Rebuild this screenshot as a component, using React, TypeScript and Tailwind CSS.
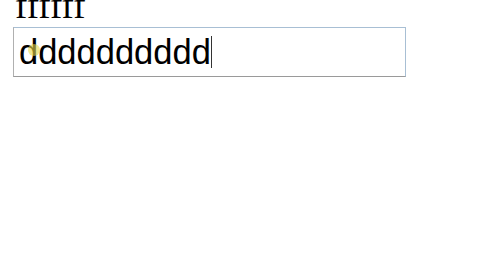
export default function App() {
  return (
    <div className="w-[480px] h-[270px] bg-white overflow-hidden">
      <div className="pl-[15px] mt-[-14px] text-[37px] leading-[40px] text-black font-['Liberation_Serif',serif]">
        ffffff
      </div>
      <div className="ml-[13px] mt-[1px] w-[393px] h-[50px] border border-[#a8bfd4] border-b-[#9a9a9a] border-l-[#b0b0b0] flex items-center pl-[5px] relative">
        <span className="text-[34.5px] leading-none text-black font-['Liberation_Sans',Arial,sans-serif]">
          dddddddddd
        </span>
        <span className="w-px h-[32px] bg-[#333]" />
        {/* cursor highlight */}
        <span className="absolute left-[14px] top-[16px] w-[12px] h-[12px] rounded-full bg-[#e8d84a]/60" />
      </div>
    </div>
  );
}
